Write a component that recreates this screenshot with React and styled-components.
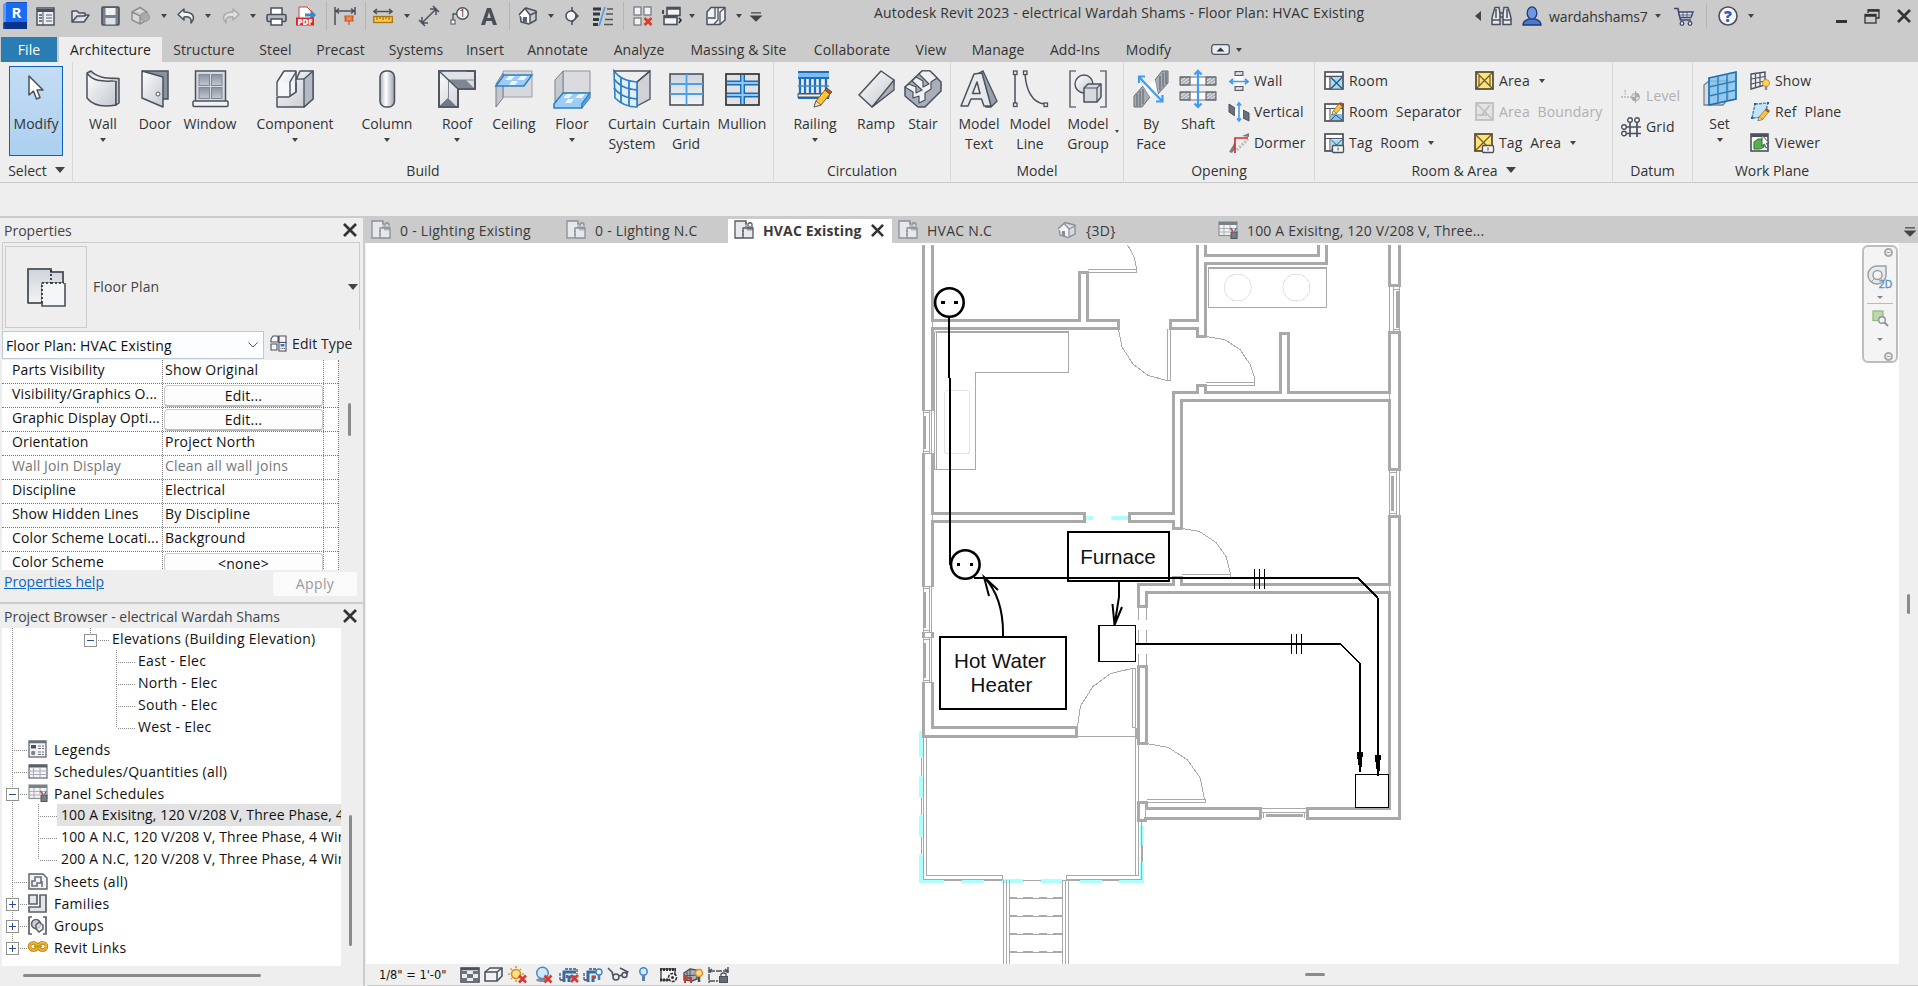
import React from "react";
import styled, { createGlobalStyle, css } from "styled-components";

const GlobalStyle = createGlobalStyle`
  * { box-sizing: border-box; }
  html, body { margin: 0; padding: 0; overflow: hidden; }
  body { font-family: "Open Sans", "Noto Sans", sans-serif; font-size: 14px; color: #333; background: #eee; }
  svg { display: block; flex: none; overflow: visible; }
`;

/* ---------- icons ---------- */
const D = "#4b515c";
const B = "#2f7fc4";

const pencil = (x, y, s = 1) => (
  <g transform={`translate(${x} ${y}) scale(${s})`}>
    <path d="M0 18 L2 12 L11 1 L16 5 L7 16 Z" fill="#ffc53a" stroke="#8a5a1c" strokeWidth="1" />
    <path d="M11 1 L13 -1 L18 3 L16 5 Z" fill="#b5562a" stroke="#6b3a1a" strokeWidth=".8" />
    <path d="M0 18 L2 12 L7 16 Z" fill="#f6e2bd" stroke="#555" strokeWidth=".8" />
  </g>
);

const hatchBox = (x, y, w, h) => (
  <g>
    <rect x={x} y={y} width={w} height={h} fill="#a9adb5" stroke="#555a63" />
    <path d={`M${x + 1} ${y + h - 1}L${x + w - 1} ${y + 1}M${x + 1} ${y + h / 2}L${x + w / 2} ${y + 1}M${x + w / 2} ${y + h - 1}L${x + w - 1} ${y + h / 2}`} stroke="#eee" strokeWidth="1" />
  </g>
);

const redX = (x, y) => (
  <path d={`M${x} ${y}l7 7m0 -7l-7 7`} stroke="#d93a2b" strokeWidth="2.6" fill="none" />
);

const ICONS = {
  logo: [25, 28, <>
    <path d="M0 3L4 0H24V27H0Z" fill="#1552c4" /><path d="M3 1H24V20H3Z" fill="#1a6cf5" /><path d="M0 3L3 1V20L0 21Z" fill="#5a9bff" /><path d="M1 20H24V27H2Z" fill="#0b3487" />
    <text x="13.5" y="15.5" fontSize="15" fontWeight="700" fill="#fff" textAnchor="middle">R</text></>],
  props: [19, 19, <><rect x="1" y="1" width="17" height="17" fill="#eceef1" stroke={D} strokeWidth="1.5" /><path d="M1 3.5H18" stroke={D} strokeWidth="3" /><path d="M7 5V18" stroke={D} /><path d="M3 8H6M3 11H6M3 14H6" stroke={D} strokeWidth="1.6" /><path d="M10 8H16M10 11H16M10 14H16" stroke="#888d96" strokeWidth="1.6" /></>],
  open: [21, 16, <path d="M2 14V3H7L9 5H15V8H7L2 14H14L19 7H15" fill="#dfe2e6" stroke={D} strokeWidth="1.5" strokeLinejoin="round" />],
  save: [19, 20, <><rect x="1" y="1" width="17" height="18" rx="1" fill="#7a808b" stroke={D} strokeWidth="1.6" /><rect x="4.500" y="2" width="10" height="7" fill="#f0f1f3" /><rect x="4.500" y="12" width="10" height="6.500" fill="#dfe2e6" /></>],
  cloud: [21, 20, <><path d="M2 6L10 1.500L17 6V14L10 18L2 14ZM2 6L10 10L17 6M10 10V18" fill="#d8d8d8" stroke="#8f8f8f" strokeWidth="1.5" /><circle cx="15" cy="11" r="4.500" fill="#ababab" stroke="#969696" /></>],
  undo: [20, 18, <path d="M8 2L2 7.500L8 13V10C13 9 16 11 15 16C20 10 17 5 8 5Z" fill="#f2f3f5" stroke={D} strokeWidth="1.5" strokeLinejoin="round" />],
  redo: [20, 18, <path d="M12 2L18 7.500L12 13V10C7 9 4 11 5 16C0 10 3 5 12 5Z" fill="#dedede" stroke="#aaa" strokeWidth="1.5" strokeLinejoin="round" />],
  print: [21, 19, <><rect x="5" y="1" width="11" height="8" fill="#fff" stroke={D} strokeWidth="1.5" /><rect x="1" y="7.500" width="19" height="7" rx="1.500" fill="#b5bac2" stroke={D} strokeWidth="1.6" /><rect x="5" y="12" width="11" height="6" fill="#fff" stroke={D} strokeWidth="1.5" /></>],
  pdf: [21, 20, <><path d="M3 12V1H11L15 5V12" fill="#fff" stroke="#c9463c" /><path d="M9 7.500H15V4L20 9L15 14V10.500H9Z" fill="#2a8ad8" /><rect x="0" y="11.500" width="18" height="8" fill="#d5281e" /><text x="9" y="18.500" fontSize="8" fontWeight="800" fill="#fff" textAnchor="middle">PDF</text></>],
  dimPin: [22, 20, <><path d="M1 1V19M21 1V9M2 5H20M5 2.500L2 5L5 7.500M17 2.500L20 5L17 7.500" stroke={D} strokeWidth="1.5" fill="none" /><path d="M11 10H19V12H18L19 15H11L12 12H11ZM15 15V19" fill="#f08a4a" stroke="#c9552a" strokeWidth="1.200" /></>],
  ruler: [20, 14, <><path d="M1 2.500H19M4 0L1 2.500L4 5M16 0L19 2.500L16 5" stroke={D} strokeWidth="1.6" fill="none" /><rect x=".7" y="7.500" width="18.600" height="6" fill="#ffc93c" stroke="#a8741a" strokeWidth="1.300" /><path d="M4 8V11M7 8V10M10 8V11M13 8V10M16 8V11" stroke="#8a5f16" /></>],
  align: [20, 20, <path d="M3 17L17 3M3 11V17H9M11 3H17V9M0 14L6 20M14 0L20 6" stroke={D} strokeWidth="1.500" fill="none" />],
  tag: [19, 18, <><circle cx="12.500" cy="6.500" r="5.800" fill="#f4f5f6" stroke={D} strokeWidth="1.400" /><path d="M6.500 7H3V13" stroke={D} strokeWidth="1.300" fill="none" /><rect x="1" y="13" width="4" height="4" fill="#fff" stroke={D} /><text x="12.300" y="10.200" fontSize="10" fill="#333" textAnchor="middle">1</text></>],
  textA: [18, 19, <path d="M1 18L7 1H11L17 18H13L11.700 14H6.300L5 18ZM7.200 11H10.800L9 5Z" fill="#4b4f57" fillRule="evenodd" />],
  house: [20, 20, <><path d="M2 8L8 2L18 5V14L11 18L3 16Z" fill="#c6cad1" stroke={D} strokeWidth="1.500" strokeLinejoin="round" /><path d="M1 9L7 2.500L12 9V18M12 9L19 6" fill="#fff" stroke={D} strokeWidth="1.500" /><rect x="5" y="11" width="4" height="5" fill="#5b616c" /></>],
  section: [16, 18, <><path d="M8 0V18" stroke={D} strokeWidth="1.500" /><path d="M8 2L15 9L8 16Z" fill={D} /><circle cx="7" cy="9" r="5" fill="#f4f5f6" stroke={D} strokeWidth="1.600" /></>],
  thin: [20, 19, <><path d="M0 2H8M0 7H7M0 12.500H6M0 17.500H5" stroke="#33373e" strokeWidth="3" /><path d="M14 2H20M13 7H20M12 12.500H20M11 17.500H20" stroke="#555" strokeWidth="1.300" /><path d="M12 0L6 19" stroke="#4a9be8" strokeWidth="1.600" /></>],
  closeWin: [20, 20, <><g fill="#f3f3f3" stroke="#777c86" strokeWidth="1.300"><rect x="1" y="1" width="7" height="8" /><rect x="11" y="1" width="7" height="8" /><rect x="1" y="12" width="7" height="7" /></g>{redX(11.500, 12)}</>],
  switchWin: [20, 20, <><rect x="5" y="1.500" width="13" height="8" fill="#f3f3f3" stroke={D} strokeWidth="1.600" /><path d="M5 2.500H18" stroke={D} strokeWidth="2.500" /><rect x="2" y="10" width="13" height="8.500" fill="#f3f3f3" stroke={D} strokeWidth="1.600" /><path d="M2 11H15" stroke={D} strokeWidth="2.500" /><path d="M1 8V4M17 12L19 14L17 17" stroke="#222" strokeWidth="1.500" fill="none" /></>],
  comp: [21, 20, <><path d="M1 6L5 1.500H19V14L14 18.500H1Z" fill="#f1f2f4" stroke={D} strokeWidth="1.500" strokeLinejoin="round" /><path d="M9 1.500V12H2M12 2V14L8 18M14 18V6L19 1.500" stroke={D} strokeWidth="1.300" fill="none" /></>],
  qatMenu: [10, 9, <path d="M0 .8H10M0 4H10L5 9Z" fill="#444" stroke="#444" strokeWidth="1.200" />],
  binoc: [21, 20, <><path d="M2 8L4 1.500H8L9 8V18.500H1V12Z M12 8L13 1.500H17L19 8L20 12V18.500H12Z" fill="#e7e9ec" stroke={D} strokeWidth="1.500" /><path d="M9 7H12M9 11H12M1 14H9M12 14H20M5 3V12M16 3V12" stroke={D} strokeWidth="1.500" /></>],
  user: [20, 20, <><path d="M1 19C1 14 5 14 8 12.500H12C15 14 19 14 19 19Z" fill="#4b78c8" stroke="#1e3a78" strokeWidth="1.300" /><ellipse cx="10" cy="7" rx="4.800" ry="6.200" fill="#6d97e0" stroke="#1e3a78" strokeWidth="1.300" /></>],
  cart: [20, 19, <><path d="M0 1.500H4L6.500 13H17" stroke="#3f4870" strokeWidth="1.600" fill="none" /><path d="M4.500 5H19L17 10.500H6Z" fill="#e9ebf2" stroke="#3f4870" strokeWidth="1.400" /><path d="M9 5V10M13 5V10M5 8H18" stroke="#3f4870" strokeWidth=".8" /><circle cx="8" cy="16.500" r="1.800" fill="#fff" stroke="#3f4870" strokeWidth="1.300" /><circle cx="16" cy="16.500" r="1.800" fill="#fff" stroke="#3f4870" strokeWidth="1.300" /></>],
  help: [20, 20, <><circle cx="10" cy="10" r="9" fill="#f7f8fa" stroke="#4a4f5c" strokeWidth="1.600" /><text x="10" y="15.500" fontSize="15.500" fontWeight="800" fill="#2a5fc0" textAnchor="middle">?</text></>],
  min: [11, 13, <rect y="10" width="11" height="3" fill="#333" />],
  restore: [16, 15, <><path d="M4 4V1H15V9H12" stroke="#333" strokeWidth="1.300" fill="none" /><path d="M4 1.500H15M1 6.500H12" stroke="#333" strokeWidth="2.500" /><rect x="1" y="5.500" width="11" height="8.500" fill="none" stroke="#333" strokeWidth="1.300" /></>],
  close: [14, 14, <path d="M1 1L13 13M13 1L1 13" stroke="#333" strokeWidth="2.700" />],
  collapse: [19, 11, <><rect x=".7" y=".7" width="17.600" height="9.600" rx="2.500" fill="#e8ebef" stroke="#50555f" strokeWidth="1.300" /><path d="M5.500 7.500H13.500L9.500 3.500Z" fill="#333" /></>],

  cursor: [20, 27, <path d="M3 1V20L7.500 16L10.500 24L14 22.500L11 15H17Z" fill="#fff" stroke={D} strokeWidth="1.500" strokeLinejoin="round" />],
  wall: [36, 38, <><path d="M2 3C9 13 20 11 31 11V35C20 37 9 37 2 28Z" fill="url(#gl)" stroke={D} strokeWidth="1.500" strokeLinejoin="round" /><path d="M2 3L6 1C14 9 24 8 34 8.500V33L31 35V11" fill="#c4c9d0" stroke={D} strokeWidth="1.500" strokeLinejoin="round" /></>],
  door: [28, 38, <><path d="M1 1H27V29H22" fill="#8b929f" stroke={D} strokeWidth="1.500" /><path d="M1 1L22 7V37L1 28Z" fill="url(#gl)" stroke={D} strokeWidth="1.500" strokeLinejoin="round" /><circle cx="17" cy="24" r="2" fill="#fff" stroke={D} /></>],
  window: [37, 38, <><rect x="3.500" y="1" width="30" height="31" fill="#d7dadf" stroke={D} strokeWidth="1.500" /><g fill="url(#gd)" stroke="#808692"><rect x="7" y="4.500" width="10.500" height="11" /><rect x="19.500" y="4.500" width="10.500" height="11" /><rect x="7" y="17.500" width="10.500" height="11" /><rect x="19.500" y="17.500" width="10.500" height="11" /></g><rect x="1" y="31" width="35" height="5.500" rx="1" fill="#f1f2f4" stroke={D} strokeWidth="1.500" /></>],
  component: [38, 38, <><path d="M1 12L8 1H20V22L14 27H1Z" fill="#f4f5f6" /><path d="M1 12L8 1H20V10L24 1H37V29L28 37H1V27H13L20 22V12" fill="url(#gl)" stroke={D} strokeWidth="1.500" strokeLinejoin="round" /><path d="M1 12V26M20 9V22L14 26V12L20 2" stroke={D} strokeWidth="1.400" fill="none" /><path d="M28 9L37 1V29L28 37Z" fill="#b4bac4" stroke={D} strokeWidth="1.300" strokeLinejoin="round" /><path d="M28 9H20" stroke={D} strokeWidth="1.300" /></>],
  column: [17, 38, <rect x="1" y="1" width="14.500" height="36" rx="6" fill="url(#gc)" stroke={D} strokeWidth="1.500" />],
  roof: [38, 38, <><path d="M1 1H37V19H20V37H1Z" fill="url(#gl)" stroke={D} strokeWidth="1.600" /><path d="M1 1L10.500 10H28V1Z" fill="#dfe2e7" /><path d="M1 37L10.500 28V10H37" fill="none" stroke="#7f8591" /><path d="M11 10L20 19H37L28 10Z" fill="#7f8794" /><path d="M1 37L10 28L19 37Z" fill="#727986" /><path d="M1 1L20 19" stroke={D} strokeWidth="1.300" /><path d="M1 1H37V19H20V37H1Z" fill="none" stroke={D} strokeWidth="1.600" /></>],
  ceiling: [38, 38, <><path d="M8 1H37V27H8Z" fill="#d6d8dc" stroke="#999ea7" /><path d="M1 14L8 3V28L1 37Z" fill="#c3c7ce" stroke="#777d88" /><path d="M1 16L9 5H37L29 16Z" fill="#9ccdf6" stroke={B} strokeWidth="1.500" /><path d="M10 10L14 6H20L16 10ZM22 10L26 6H32L29 10ZM14 15L17 11H23L20 15Z" fill="#fff" opacity=".8" /></>],
  floor: [38, 39, <><path d="M10 1H37V23H10Z" fill="#d9dbdf" stroke="#8c919b" /><path d="M2 10L10 1V24L2 33Z" fill="#c6cad0" stroke="#7d828c" /><path d="M1 34L10 23H37L29 34V38H1Z" fill="#9ccdf6" stroke={B} strokeWidth="1.600" strokeLinejoin="round" /><path d="M29 34L37 23V28L29 38Z" fill="#5aa4e0" stroke={B} /><path d="M10 28L14 24H20L16 28ZM22 28L26 24H32L29 28ZM12 33L15 29H21L18 33Z" fill="#fff" opacity=".8" /></>],
  curtainSystem: [38, 38, <><path d="M24 12L37 1V29L24 36Z" fill="#cfd2d7" stroke={D} strokeWidth="1.300" /><path d="M1 1C8 10 16 11 24 12V37C14 37 8 34 2 28Z" fill="#dfeefb" stroke={B} strokeWidth="1.600" /><path d="M1 9C8 18 16 19 24 20M1 18C8 27 16 28 24 29M8 7V33M16 11V36" stroke={B} strokeWidth="1.800" fill="none" /><path d="M1 1H37M24 12L37 1" stroke={D} strokeWidth="1.500" /></>],
  curtainGrid: [35, 33, <><rect x="1" y="1" width="33" height="31" fill="url(#gd2)" stroke={D} strokeWidth="1.600" /><path d="M17.500 1V32M1 11H34M1 21H34" stroke="#49a0ec" strokeWidth="1.800" /></>],
  mullion: [35, 33, <><rect x="1" y="1" width="33" height="31" fill="#dfe1e5" stroke="#333" strokeWidth="1.700" /><path d="M17.500 2V31M2 10H33M2 22H33" stroke="#1c6cb5" strokeWidth="5" /><path d="M17.500 2V31M2 10H33M2 22H33" stroke="#8cc8f8" strokeWidth="2.200" /></>],
  railing: [37, 38, <><path d="M1 2H32M1 8H32M1 24H32M1 28H32" stroke="#1d70bb" strokeWidth="2" /><path d="M1 5H32" stroke="#7dbcf0" strokeWidth="4" /><path d="M3 8V25M8 8V25M13 8V25M18 8V25M23 8V25M29 8V25" stroke="#1d70bb" strokeWidth="2.300" /><path d="M1 16H32" stroke="#3a8cd4" strokeWidth="1.500" /><rect x="1" y="24" width="31" height="3" fill="#eee" stroke={D} />{pencil(17, 19)}</>],
  ramp: [37, 38, <><path d="M1 25L23 1L36 10L35 20L14 37Z" fill="url(#gl)" stroke={D} strokeWidth="1.500" strokeLinejoin="round" /><path d="M14 37L36 10V20Z" fill="#a9afb9" stroke={D} strokeWidth="1.300" strokeLinejoin="round" /></>],
  stair: [38, 38, <><path d="M1 17L18 1H26L37 12V21L21 37H14L1 26Z" fill="#a9afba" stroke={D} strokeWidth="1.500" strokeLinejoin="round" /><path d="M1 17L5 14L12 17V23L18 20L8 11L12 7L19 11V17L25 14L15 4L18 1H26L33 8L27 12V19L21 23V30L15 33V26L9 28V22Z" fill="#f0f1f3" stroke={D} strokeWidth="1.200" strokeLinejoin="round" /></>],
  modelText: [38, 38, <><path d="M19 3L23 1L37 31L31 37H26L23 30Z" fill="#9aa1ad" stroke={D} strokeWidth="1.300" /><path d="M1 36L14 4L22 3L31 36H24L21.500 29H11L8 36ZM12.500 23.500H20L17 12Z" fill="#e7e9ec" fillRule="evenodd" stroke={D} strokeWidth="1.500" strokeLinejoin="round" /></>],
  modelLine: [37, 38, <><path d="M3 4V34M13 4C14 18 19 33 33 34" stroke={D} strokeWidth="1.500" fill="none" /><g fill="#eee" stroke={D} strokeWidth="1.300"><rect x="1.500" y="1" width="3.500" height="3.500" /><rect x="1.500" y="33" width="3.500" height="3.500" /><rect x="11.500" y="1" width="3.500" height="3.500" /><rect x="32" y="33" width="3.500" height="3.500" /></g></>],
  modelGroup: [38, 38, <><path d="M7 1H1V37H7M31 1H37V37H31" stroke="#70757f" strokeWidth="1.700" fill="none" /><circle cx="15" cy="14" r="9" fill="url(#gl)" stroke={D} strokeWidth="1.400" /><path d="M15 18L19 14H32V27L28 32H15Z" fill="#d6d9de" stroke={D} strokeWidth="1.500" strokeLinejoin="round" /><path d="M15 18H28L32 14M28 18V32" stroke={D} fill="none" strokeWidth="1.200" /></>],
  byFace: [36, 38, <><path d="M22 10L29 1H35V13L25 24ZM1 26L10 16L17 27L9 37H1Z" fill="#a7abb3" stroke="#686d77" /><path d="M27 6V20M30 3V17M33 2V14M4 24V36M7 21V36M10 19V34" stroke="#5b6069" /><path d="M10 16L22 10L25 24L17 27Z" fill="#fafafa" /><path d="M6 7L29 31M6 13V6.500H12M23 31.500H29.500V25" stroke="#3e9cf3" strokeWidth="2.200" fill="none" /></>],
  shaft: [38, 38, <>{hatchBox(1, 7, 10, 8)}{hatchBox(27, 7, 10, 8)}{hatchBox(1, 22, 10, 8)}{hatchBox(27, 22, 10, 8)}<rect x="12" y="6.500" width="14" height="9" fill="#fff" /><rect x="12" y="21.500" width="14" height="9" fill="#fff" /><path d="M1 7H37M1 15H37M1 22H37M1 30H37" stroke="#666b75" /><path d="M19 2V36M15.500 4.500L19 .8L22.500 4.500M15.500 33.500L19 37L22.500 33.500" stroke="#3e9cf3" strokeWidth="2.200" fill="none" /></>],
  oWall: [20, 20, <>{hatchBox(6, .5, 8, 4)}{hatchBox(6, 15.500, 8, 4)}<rect x="6" y="5" width="8" height="10" fill="#fff" /><path d="M1 10.500H19M4 8L1 10.500L4 13M16 8L19 10.500L16 13" stroke="#3e9cf3" strokeWidth="1.700" fill="none" /></>],
  oVert: [20, 20, <><path d="M0 2L6 6V14L0 10ZM14 8L20 11V19L14 16Z" fill="#6b7079" stroke={D} /><path d="M6 6L14 8V16L6 14Z" fill="#fff" /><path d="M10 1V19M8 3.500L10 .8L12 3.500M8 16.500L10 19L12 16.500" stroke="#3e9cf3" strokeWidth="1.600" fill="none" /></>],
  oDormer: [20, 20, <><path d="M0 19L6 9V16L3 20ZM13 3L20 0V4Z" fill="#777c86" /><path d="M8 17L19 6" stroke="#bbb" strokeWidth="3" strokeDasharray="2 1.500" /><path d="M6 20V5H19" stroke="#d5322b" strokeWidth="1.700" fill="none" /></>],
  room: [20, 19, <><rect x="1" y="1" width="18" height="17" fill="#fff" stroke={D} strokeWidth="1.700" /><path d="M1 5.500H19M6 5.500V18" stroke={D} strokeWidth="1.300" /><rect x="7" y="6.500" width="11" height="11" fill="#a8dcf4" /><path d="M7 6.500L18 17.500M18 6.500L7 17.500" stroke="#27567c" strokeWidth="1.300" /></>],
  roomSep: [20, 20, <><rect x="1" y="2" width="18" height="17" fill="#fff" stroke={D} strokeWidth="1.700" /><path d="M1 6.500H19M6 6.500V19" stroke={D} /><rect x="7" y="12" width="11" height="6" fill="#7fc4ec" /><path d="M7 18L12 13L18 18" stroke="#27567c" fill="none" />{pencil(8, 1, .65)}</>],
  tagRoom: [20, 20, <><rect x="1" y="1" width="18" height="17" fill="#fff" stroke={D} strokeWidth="1.700" /><path d="M1 5.500H19M6 5.500V18" stroke={D} /><rect x="7" y="6.500" width="11" height="11" fill="#a8dcf4" /><path d="M7 6.500L18 17.500M18 6.500L7 17.500" stroke="#27567c" /><rect x="8.500" y="12.500" width="11" height="7" rx="1" fill="#f4f5f7" stroke={D} strokeWidth="1.300" /><path d="M14 14.500V17.500" stroke="#444" /></>],
  area: [19, 19, <><rect x="1" y="1" width="17" height="17" fill="#ffe27a" stroke="#54472a" strokeWidth="1.700" /><path d="M2 2L17 17M17 2L2 17M4 5V15M15 5V15" stroke="#6b5a2b" strokeWidth="1.200" /></>],
  areaB: [19, 19, <><rect x="1" y="1" width="17" height="17" fill="#e4e4e4" stroke="#bdbdbd" strokeWidth="1.700" /><path d="M2 2L17 17M6 14L15 3M2 13H12" stroke="#bdbdbd" strokeWidth="1.500" /></>],
  tagArea: [20, 20, <><rect x="1" y="1" width="17" height="17" fill="#ffe27a" stroke="#54472a" strokeWidth="1.700" /><path d="M2 2L17 17M17 2L2 17" stroke="#6b5a2b" strokeWidth="1.200" /><rect x="8.500" y="12.500" width="11" height="7" rx="1" fill="#f4f5f7" stroke={D} strokeWidth="1.300" /><path d="M14 14.500V17.500" stroke="#444" /></>],
  level: [20, 14, <><path d="M0 8H10" stroke="#b5b5b5" strokeDasharray="2 1" strokeWidth="1.500" /><text x="4" y="5.500" fontSize="7" fill="#aaa" textAnchor="middle">1</text><circle cx="14.500" cy="8" r="4" fill="#d8d8d8" stroke="#b0b0b0" /><path d="M14.500 4A4 4 0 0 1 18.500 8H10.500A4 4 0 0 0 14.500 12Z" fill="#aaa" /><path d="M14.500 2V14" stroke="#aaa" /></>],
  grid: [20, 20, <><path d="M9 5V20M16 5V20M5 10H20M5 16.500H20" stroke={D} strokeWidth="1.700" /><g fill="#fff" stroke={D} strokeWidth="1.400"><circle cx="9" cy="3" r="2.300" /><circle cx="16" cy="3" r="2.300" /><circle cx="3" cy="10" r="2.300" /><circle cx="3" cy="16.500" r="2.300" /></g></>],
  set: [34, 36, <><path d="M1 14L6 10H25V28L20 34H1Z" fill="#d8dbe0" stroke="#7c828d" strokeWidth="1.300" /><path d="M6 7L33 1V28L6 34Z" fill="#7fc2ec" fillOpacity=".8" stroke="#1d6eb0" strokeWidth="1.700" /><path d="M15 5V32M24 3V30M6 16L33 10M6 25L33 19" stroke="#2d80c0" strokeWidth="1.500" /></>],
  show: [20, 20, <><path d="M1 3L15 1V14L1 18Z" fill="#eceef0" stroke={D} strokeWidth="1.400" /><path d="M5.500 2.500V17M10 2V15.500M1 8L15 5.500M1 13L15 10" stroke={D} strokeWidth="1.200" /><circle cx="16" cy="12" r="3.500" fill="#ffd84a" stroke="#e08a2a" /><path d="M16 15V19" stroke="#8a8f98" strokeWidth="2.500" /></>],
  refPlane: [20, 19, <><path d="M5 2L18 1L14 15L2 16Z" fill="#c5e4fa" stroke="#2f86d0" strokeWidth="1.400" strokeDasharray="3 1" /><path d="M4 1h2v2h-2zM17 0h2v2h-2zM1 15h2v2h-2z" fill="#1c5f9e" />{pencil(8, 7, .65)}</>],
  viewer: [20, 19, <><rect x="1" y="1" width="17" height="17" fill="#f4f5f6" stroke={D} strokeWidth="1.600" /><path d="M1 2.500H18" stroke={D} strokeWidth="3" /><path d="M4 9L8 6H14V14L10 16H4Z" fill="#57b04e" stroke="#2d7a2a" /><path d="M12 2V13L14.500 11L16 15L18 14L16.500 10H19Z" fill="#fff" stroke={D} /></>],

  planBig: [39, 39, <><path d="M1 1H24V4H36V15H15V35H1Z" fill="url(#gd2)" stroke="#70757e" strokeWidth="1.600" /><rect x="15" y="15" width="23" height="23" fill="#f4f5f6" /><path d="M1 35V1H24V4H36V15M1 35H15V38H38V15" fill="none" stroke={D} strokeWidth="1.600" /><path d="M24 2V15H15V36M24 15H37" stroke="#222" strokeWidth="1.600" strokeDasharray="2 2" fill="none" /></>],
  editType: [17, 17, <><path d="M1 4L3 1H8V7H1ZM9 1H16V8M9 1V7M1 9H7V15H1Z" fill="#f6f6f6" stroke={D} strokeWidth="1.100" /><rect x="9" y="7.500" width="7" height="8.500" fill="#fff" stroke={D} strokeWidth="1.100" /><rect x="10.500" y="9" width="4" height="2.500" fill="#3377cc" /><path d="M10.500 13.500H15" stroke={D} strokeDasharray="1 .7" /></>],
  plan: [20, 20, <><path d="M1 1H12V5H19V18H9V19H1Z" fill="#e6e8eb" /><path d="M12 5V1H1V18H9V8H19V18H9" stroke="currentColor" strokeWidth="1.300" fill="none" /><path d="M12 2V8M9 10V18" stroke="currentColor" strokeDasharray="2 1.500" strokeWidth="1.200" fill="none" /><path d="M14 6V4Q16 1.500 18 4V6" stroke="currentColor" strokeWidth="1.300" fill="none" /><rect x="13" y="6" width="6" height="4.500" fill="currentColor" opacity=".55" /></>],
  view3d: [20, 18, <><path d="M2 7L8 1.500L18 4V13L11 16.500L3 14Z" fill="#d9dbde" stroke="#888d96" strokeWidth="1.300" /><path d="M1 8L7 2.500L12 8V16.500M12 8L18 5" stroke="#888d96" strokeWidth="1.200" fill="#f5f5f5" /><rect x="5" y="10" width="3" height="5" fill="#888d96" /></>],
  sched: [20, 18, <><rect x="1" y="1" width="18" height="13.500" fill="#f1f2f4" stroke="#8b9099" strokeWidth="1.200" /><path d="M1 2.500H19" stroke="#7a808a" strokeWidth="3" /><path d="M1 7.500H19M1 11H12M6 4V14M12 4V10" stroke="#a9adb4" /><rect x="13" y="11" width="6" height="6.500" fill="#777d88" stroke="#555" /><path d="M12.500 7L15 10.500" stroke="#c33" strokeWidth="1.300" /><path d="M18.500 7L16.500 10.500" stroke="#37a" strokeWidth="1.300" /></>],
  legend: [19, 18, <><rect x="1" y="1" width="17" height="16" fill="#f4f5f6" stroke="#6b717b" strokeWidth="1.400" /><path d="M1 2H18" stroke="#6b717b" strokeWidth="2.500" /><rect x="3" y="5" width="5" height="3.500" fill="#4b515c" /><circle cx="5.200" cy="13" r="2.200" fill="#7d838d" /><path d="M10 6H16M10 8.500H16M10 12H16M10 14.500H16" stroke="#6b717b" strokeWidth="1.200" strokeDasharray="3 1" /></>],
  table: [20, 15, <><rect x="1" y="1" width="18" height="13" fill="#f4f5f6" stroke="#6b717b" strokeWidth="1.300" /><path d="M1 2H19" stroke="#5a606a" strokeWidth="3" /><path d="M1 7H19M1 10.500H19M5.500 3V14M12 3V14" stroke="#a6abb3" /></>],
  sheets: [20, 17, <><path d="M1 1H15L19 5V16H1Z" fill="#f1f2f4" stroke="#5b616b" strokeWidth="1.400" /><path d="M4 13V8H7V4H13V10H9V13ZM14 8V14" fill="none" stroke="#6b717b" strokeWidth="1.600" /></>],
  families: [19, 19, <path d="M1 1H9V10H1ZM12 1H18V18H1V13H12Z" fill="#e3e5e8" stroke="#5b616b" strokeWidth="1.700" />],
  groups: [19, 19, <><path d="M4 1H1V18H4M15 1H18V18H15" stroke="#5b616b" strokeWidth="1.700" fill="none" /><circle cx="8" cy="8" r="4.500" fill="#c9cdd4" stroke="#5b616b" strokeWidth="1.500" /><path d="M8 9L11 6L15 9V13L11 16L8 13Z" fill="#e3e5e8" fillOpacity=".7" stroke="#5b616b" strokeWidth="1.500" /></>],
  links: [20, 12, <><rect x="1.500" y="2" width="8" height="7" rx="3.500" fill="none" stroke="#a06f14" strokeWidth="3.400" /><rect x="10.500" y="2" width="8" height="7" rx="3.500" fill="none" stroke="#a06f14" strokeWidth="3.400" /><rect x="1.500" y="2" width="8" height="7" rx="3.500" fill="none" stroke="#eab02b" strokeWidth="2.400" /><rect x="10.500" y="2" width="8" height="7" rx="3.500" fill="none" stroke="#eab02b" strokeWidth="2.400" /><path d="M6 5.500H14" stroke="#c98f1c" strokeWidth="2.200" /></>],

  vDetail: [20, 16, <><rect x="1" y="1" width="18" height="14" fill="#e9ebed" stroke={D} strokeWidth="1.600" /><path d="M1 2H19" stroke={D} strokeWidth="2.500" /><path d="M2 4H7V7H2ZM13 4H18V7H13ZM7 7H13V11H7ZM2 11H7V14H2ZM13 11H18V14H13Z" fill="#6d737e" /></>],
  vStyle: [19, 15, <><path d="M1 5L6 1H18V9L13 14H1Z" fill="#f0f1f3" stroke={D} strokeWidth="1.600" strokeLinejoin="round" /><path d="M1 5H13L18 1M13 5V14" stroke={D} strokeWidth="1.500" fill="none" /></>],
  vSun: [20, 18, <><circle cx="8" cy="8" r="4.500" fill="#ffe08a" stroke="#d68a1e" strokeWidth="1.500" /><path d="M8 0V2M8 14V16M0 8H2M2.500 2.500L4 4M13 3L12 4M3 13L4 12M14 8H16" stroke="#e09a2a" strokeWidth="1.700" />{redX(11, 9.500)}</>],
  vShadow: [18, 18, <><ellipse cx="8" cy="14" rx="7" ry="2" fill="#8a8f98" /><circle cx="7.500" cy="7" r="5.800" fill="#cfe7fb" stroke="#4a86bd" strokeWidth="1.400" />{redX(9.500, 9.500)}</>],
  vCropX: [20, 18, <><path d="M5 16V6H17M10 16V11H17" fill="none" stroke="#2b6fb0" strokeWidth="3" /><path d="M1 7V14M1 14H5M6 3H18V8" stroke={D} strokeWidth="1.300" strokeDasharray="3 1" /><path d="M7 10.500H9" stroke="#d93a2b" strokeWidth="3" />{redX(12, 9)}</>],
  vCropB: [20, 18, <><path d="M5 16V6H13M10 16V11H13" fill="none" stroke="#2b6fb0" strokeWidth="3" /><path d="M1 7V14M1 14H5M6 3H13" stroke={D} strokeWidth="1.300" strokeDasharray="3 1" /><path d="M9 11h4" stroke="#d93a2b" strokeWidth="2.500" /><circle cx="16" cy="6" r="3" fill="#e6f3fe" stroke="#3d82c4" strokeWidth="1.300" /><path d="M16 9V14" stroke="#3d82c4" strokeWidth="2.500" /></>],
  vGlasses: [21, 15, <path d="M0 1L5 6M12 1L20 5M5 10a3 3 0 1 0 6 0a3 3 0 1 0 -6 0M5 9L4 5M11 9L14 8M14 8a2.500 2.500 0 1 0 5 0a2.500 2.500 0 1 0 -5 0M19 7L20 4" stroke={D} strokeWidth="1.500" fill="#e4edf5" />],
  vBulb: [9, 15, <><circle cx="4.500" cy="4.500" r="3.700" fill="#d5ebfd" stroke="#3d82c4" strokeWidth="1.500" /><path d="M4.500 8V14" stroke="#5b7fa6" strokeWidth="3" /></>],
  vTemp: [19, 16, <><rect x="2" y="2" width="14" height="11" fill="#f2f3f5" stroke={D} strokeWidth="1.500" /><path d="M1 2.500H17M1 13H9" stroke="#333" strokeWidth="3" strokeDasharray="2 1" /><circle cx="13.500" cy="10.500" r="4" fill="#f2f3f5" stroke="#333" strokeWidth="1.600" strokeDasharray="3 1" /><circle cx="13.500" cy="10.500" r="1.500" fill="#333" /></>],
  vAnal: [20, 16, <><path d="M1 6L7 2L14 3V12L9 14L1 13Z" fill="#a9aeb7" stroke={D} strokeWidth="1.400" /><path d="M4 5V13M7 3V13M1 9L14 8" stroke={D} /><path d="M2 8V16M8 10V16M2 11H8" stroke="#cf3a2e" strokeWidth="2" /><circle cx="16" cy="6" r="3.500" fill="#ffe08a" stroke="#e08a2a" strokeWidth="1.500" /><path d="M16 10V15" stroke={D} strokeWidth="2.500" /></>],
  vConst: [21, 16, <><path d="M1 0V16M20 0V7M1 4H20M4 2L1 4L4 6M17 2L20 4L17 6M1 14H10" stroke={D} strokeWidth="1.400" fill="none" strokeDasharray="6 1" /><rect x="11.500" y="9.500" width="8" height="6" fill="#666c77" stroke={D} /><path d="M13 9.500V7Q15.500 5 18 7V9.500" stroke={D} strokeWidth="1.300" fill="none" /></>],
  wheel: [24, 24, <><path d="M10 1H18V10A9 9 0 1 1 10 1Z" fill="#e9eaec" stroke="#9a9ea6" strokeWidth="1.500" /><circle cx="9.500" cy="10" r="4.500" fill="#f6f6f6" stroke="#9a9ea6" strokeWidth="1.500" /><path d="M4 16L7 13M15 16L12 13" stroke="#9a9ea6" /><text x="17.500" y="23" fontSize="10.500" fill="#5a93cc" stroke="#5a93cc" strokeWidth=".4" textAnchor="middle">2D</text></>],
  zoomReg: [17, 17, <><rect x="1" y="1" width="10" height="9.500" fill="#bcd9ae" stroke="#93bb83" strokeWidth="1.300" /><circle cx="10" cy="10" r="3.300" fill="#f4f4f4" stroke="#8f939b" strokeWidth="1.400" /><path d="M12.500 12.500L16 16" stroke="#8f939b" strokeWidth="2" /></>],
};

const Icon = ({ name }) => {
  const [w, h, art] = ICONS[name];
  return <svg width={w} height={h} viewBox={`0 0 ${w} ${h}`} fill="none">{art}</svg>;
};

const Caret = styled.span`
  display: inline-block;
  flex: none;
  border: ${p => p.$s || 3}px solid transparent;
  border-top: ${p => (p.$s || 3) + 1}px solid #444;
  border-bottom: 0;
`;

/* ---------- shell ---------- */
const Shell = styled.div`
  width: 1918px; height: 986px; display: flex; flex-direction: column; background: #eee; overflow: hidden; white-space: nowrap;
`;
const TitleBar = styled.header`
  height: 37px; flex: none; display: flex; background: #cbcbcb; padding-left: 3px;
`;
const Quick = styled.div`display: flex; align-items: center; height: 32px; width: 777px;`;
const QuickItem = styled.span`margin-left: ${p => p.$gap}px; display: flex; flex: none;`;
const Divider = styled.span`width: 1px; height: 28px; background: #b4b4b4;`;
const Slot = styled.div`
  width: ${p => p.$w}px; height: 100%; display: flex; align-items: center; justify-content: center; flex: none;
  ${p => p.$line && css`border-left: 1px solid #b4b4b4; height: 24px;`}
`;
const Title = styled.div`width: 684px; padding: 3px 0 0 94px; font-size: 14px; line-height: 20px; letter-spacing: 0.15px; flex: none;`;
const Account = styled.div`display: flex; align-items: center; height: 32px; flex: none;`;
const UserName = styled.span`width: 105px; padding-left: 7px; letter-spacing: -0.1px;`;
const BackArrow = styled.span`border: 5px solid transparent; border-right: 6px solid #444; border-left: 0;`;

const RibbonTabs = styled.nav`height: 25px; flex: none; display: flex; align-items: center; background: #cbcbcb; padding-left: 1px;`;
const RTab = styled.div`
  width: ${p => p.$w}px; height: 25px; display: flex; align-items: center; justify-content: center; flex: none; padding-bottom: 1px; letter-spacing: .08px;
  ${p => p.$file && css`background: #2a7db3; color: #fff; margin-right: 2px;`}
  ${p => p.$on && css`background: #eee; color: #222;`}
`;

const Ribbon = styled.section`height: 121px; flex: none; display: flex; background: #eee; border-bottom: 1px solid #c9c9c9; padding-left: 1px;`;
const Panel = styled.div`
  width: ${p => p.$w}px; flex: none; display: flex; flex-direction: column; margin-bottom: 1px;
  border-right: ${p => (p.$last ? 0 : 1)}px solid #d8d8d8;
`;
const PanelBody = styled.div`height: 97px; display: flex;`;
const PanelTitle = styled.div`height: 22px; display: flex; align-items: center; justify-content: center; gap: 8px;`;
const BigButton = styled.button`
  all: unset; width: ${p => p.$w}px; flex: none; display: flex; flex-direction: column; align-items: center; position: relative;
`;
const BigIcon = styled.div`height: 52px; width: 100%; padding-top: 7px; display: flex; align-items: center; justify-content: center; padding-bottom: 5px;`;
const BigLabel = styled.div`line-height: 20px; text-align: center; white-space: pre; margin-bottom: 4px;`;
const SideCaret = styled.div`position: absolute; right: 4px; top: 68px; display: flex;`;
const ModifyButton = styled.button`
  all: unset; box-sizing: border-box; width: 54px; height: 90px; margin: 4px 0 0 8px; border: 1px solid #0a63bd;
  background: linear-gradient(#c4dcf4, #acd0f0); display: flex; flex-direction: column; align-items: center; padding-top: 8px; gap: 12px; line-height: 20px;
`;
const Small = styled.div`display: flex; flex-direction: column; padding-left: ${p => p.$pl || 0}px; padding-top: ${p => p.$pt ?? 3}px; width: ${p => p.$w || "auto"};`;
const SmallItem = styled.div`
  height: 31px; display: flex; align-items: center; gap: 5px; word-spacing: 4px; color: ${p => (p.$off ? "#b0b0b0" : "#333")}; letter-spacing: 0.15px;
`;
const SmallIcon = styled.span`width: 20px; display: flex; justify-content: center;`;
const SmallLabel = styled.span`padding-bottom: 1px;`;
const SmallCaret = styled.span`margin-left: 4px; display: flex;`;
const Options = styled.div`height: 33px; flex: none;`;

const Work = styled.main`flex: 1; display: flex; min-height: 0;`;
const Left = styled.aside`
  width: 365px; flex: none; border-top: 2px solid #ccc; border-right: 2px solid #ccc; display: flex; flex-direction: column;
`;
const DockTitle = styled.div`
  height: 24px; flex: none; display: flex; align-items: center; justify-content: space-between; padding: 0 6px 0 4px; font-size: 14px; color: #444;
`;
const TypeBox = styled.div`
  margin: 0 3px 0 2px; height: 88px; border: 1px solid #ccc; border-bottom: 0; display: flex; align-items: center; padding: 0 1px 0 2px; flex: none;
`;
const Thumb = styled.div`width: 82px; height: 82px; border: 1px solid #ccc; display: flex; align-items: center; justify-content: center; margin-right: 6px; align-self: flex-start; margin-top: 3px;`;
const TypeName = styled.div`flex: 1; color: #444; letter-spacing: .1px;`;
const PickRow = styled.div`height: 30px; flex: none; display: flex; align-items: flex-start; padding: 1px 0 0 2px; color: #111;`;
const Combo = styled.div`
  width: 262px; height: 28px; background: #fbfdfe; border: 1px solid #bccad6; display: flex; align-items: center; justify-content: space-between; padding: 0 5px 0 3px; margin-right: 6px; letter-spacing: .12px;
`;
const EditType = styled.div`display: flex; align-items: center; gap: 5px; height: 24px; color: #222; letter-spacing: .1px;`;
const PropArea = styled.div`height: 210px; flex: none; display: flex; padding-left: 2px;`;
const PropGrid = styled.div`width: 337px; background: #fff; overflow: hidden; border-right: 1px dotted #777; letter-spacing: .22px;`;
const PropRow = styled.div`
  height: 24px; display: grid; grid-template-columns: 161px 161px 1fr; border-bottom: 1px dotted #777; color: ${p => (p.$dim ? "#777" : "#111")};
`;
const Cell = styled.div`
  border-right: ${p => (p.$end ? 0 : 1)}px dotted #777; padding-left: ${p => p.$pl || 0}px; line-height: 20px; overflow: hidden; display: flex; letter-spacing: ${p => p.$ls ?? .22}px;
`;
const EditButton = styled.button`
  all: unset; box-sizing: border-box; flex: 1; margin: 1px 0 0 1px; height: 22px; text-align: center; line-height: 19px; background: #fdfdfd;
  border: 1px solid #ccc; border-bottom: 2px solid #b9b9b9; border-radius: 4px;
`;
const Track = styled.div`flex: 1; padding: ${p => p.$pad};`;
const VThumb = styled.div`width: 3px; height: ${p => p.$h}px; background: #8a8a8a; border-radius: 2px;`;
const HThumb = styled.div`width: ${p => p.$w}px; height: 3px; background: #8a8a8a; border-radius: 2px;`;
const PropFoot = styled.div`height: 32px; flex: none; display: flex; justify-content: space-between; padding: 2px 6px 0 4px; align-items: flex-start;`;
const HelpLink = styled.a`color: #0a63c4; text-decoration: underline; line-height: 20px;`;
const Apply = styled.button`all: unset; width: 84px; height: 24px; text-align: center; line-height: 24px; background: #fafafa; border-radius: 3px; color: #999; letter-spacing: .4px;`;
const Browser = styled.div`border-top: 2px solid #ccc; flex: 1; display: flex; flex-direction: column; min-height: 0;`;
const TreeArea = styled.div`height: 338px; display: flex; padding-left: 2px; flex: none;`;
const Tree = styled.div`width: 339px; background: #fff; overflow: hidden; color: #111; position: relative;`;
const TreeGuides = styled.svg`position: absolute; left: 0; top: 0;`;
const TreeRow = styled.div`height: 22px; display: flex; align-items: center; padding-left: ${p => p.$pl}px; position: relative; letter-spacing: .3px;`;
const TreeIcon = styled.span`width: 21px; margin-right: 6px; display: flex; justify-content: center;`;
const TreeText = styled.span`line-height: 22px; padding: 0 4px; letter-spacing: ${p => p.$ls ?? .3}px; ${p => p.$sel && css`background: #e2e2e2;`}`;
const Toggle = styled.span`
  width: 13px; height: 13px; border: 1px solid #919191; background: #fff; position: relative; flex: none; margin-right: ${p => p.$mr}px; top: 1px;
  &::before { content: ""; position: absolute; left: 2px; top: 5px; width: 7px; height: 1px; background: #2b4a9b; }
  &::after { content: ""; position: absolute; left: 5px; top: 2px; width: 1px; height: ${p => (p.$plus ? 7 : 0)}px; background: #2b4a9b; }
`;

const Center = styled.div`flex: 1; display: flex; flex-direction: column; min-width: 0;`;
const DocTabs = styled.div`height: 27px; flex: none; background: #cbcbcb; display: flex; align-items: flex-end; padding-right: 3px;`;
const DocTab = styled.div`
  width: ${p => p.$w}px; height: 24px; display: flex; align-items: center; padding: 0 0 2px 6px; gap: 9px; color: ${p => (p.$on ? "#555a63" : "#8b8f96")}; letter-spacing: ${p => p.$ls ?? .27}px;
  ${p => p.$on && css`background: #fff; font-weight: 700; letter-spacing: 0.15px;`}
`;
const DocLabel = styled.span`color: #3a3a3a; flex: 1;`;
const TabsMenu = styled.div`margin-left: auto; height: 24px; display: flex; align-items: center;`;
const CanvasRow = styled.div`flex: 1; display: flex; min-height: 0; position: relative;`;
const Sheet = styled.svg`background: #fff; margin-left: 1px;`;
const Gutter = styled.div`flex: 1; background: #efefef; display: flex; padding: 349px 0 0 8px; margin-top: 2px;`;
const NavBar = styled.div`
  position: absolute; left: 1497px; top: 2px; width: 36px; height: 118px; border: 2px solid #bdbdbd; border-radius: 6px; background: #f4f4f4;
  display: flex; flex-direction: column; align-items: center; padding-top: 1px;
`;
const NavDot = styled.div`
  width: 9px; height: 9px; border: 2px solid #aaa; border-radius: 50%; align-self: flex-end; margin-right: 3px; display: flex; align-items: center; justify-content: center;
  &::after { content: ""; width: 3px; height: 1px; background: #999; }
`;
const NavPart = styled.div`height: ${p => p.$h}px; display: flex; flex-direction: column; align-items: center; justify-content: flex-end; gap: ${p => p.$g}px; ${p => p.$line && css`border-bottom: 1px solid #bbb; width: 26px; padding-bottom: 4px;`}`;
const NavCaret = styled.span`border: 3px solid transparent; border-top: 3px solid #888; border-bottom: 0;`;
const ViewBar = styled.footer`height: 22px; flex: none; background: #efefef; border-bottom: 1px solid #ccc; margin-left: 2px; display: flex; align-items: center; padding-left: 12px;`;
const Scale = styled.span`width: 80px; font-family: "DejaVu Sans Condensed", "DejaVu Sans", sans-serif; font-size: 12.7px; color: #111; padding-bottom: 1px;`;
const ScrollSpot = styled.div`margin-left: 576px;`;

/* ---------- data ---------- */
const quick = [
  ["logo", 0], ["props", 8], ["open", 15], ["save", 10], ["cloud", 10], ["caret", 10], ["undo", 9], ["caret", 9], ["redo", 10], ["caret", 9],
  ["print", 10], ["pdf", 9], ["line", 9], ["dimPin", 7], ["line", 9], ["ruler", 7], ["caret", 11], ["align", 9], ["tag", 11], ["textA", 11],
  ["line", 11], ["house", 8], ["caret", 10], ["section", 10], ["thin", 13], ["line", 10], ["closeWin", 9], ["switchWin", 9], ["caret", 7],
  ["comp", 11], ["caret", 9], ["qatMenu", 9],
];
const ribbonTabs = [["Structure", 84], ["Steel", 59], ["Precast", 71], ["Systems", 80], ["Insert", 58], ["Annotate", 87], ["Analyze", 76], ["Massing & Site", 123], ["Collaborate", 104], ["View", 54], ["Manage", 80], ["Add-Ins", 74], ["Modify", 73]];
const build = [["wall", "Wall", 60, 1], ["door", "Door", 44], ["window", "Window", 66], ["component", "Component", 104, 1], ["column", "Column", 80, 1], ["roof", "Roof", 60, 1], ["ceiling", "Ceiling", 54], ["floor", "Floor", 62, 1], ["curtainSystem", "Curtain\nSystem", 58], ["curtainGrid", "Curtain\nGrid", 50], ["mullion", "Mullion", 62]];
const circulation = [["railing", "Railing", 82, 1], ["ramp", "Ramp", 40], ["stair", "Stair", 54]];
const model = [["modelText", "Model\nText", 56], ["modelLine", "Model\nLine", 46], ["modelGroup", "Model\nGroup", 70, 2]];

const props = [
  ["Parts Visibility", "Show Original"], ["Visibility/Graphics O...", "Edit...", "b"], ["Graphic Display Opti...", "Edit...", "b"], ["Orientation", "Project North"],
  ["Wall Join Display", "Clean all wall joins", "d"], ["Discipline", "Electrical"], ["Show Hidden Lines", "By Discipline"], ["Color Scheme Locati...", "Background"], ["Color Scheme", "<none>", "b"],
];

const Big = ({ item: [icon, label, w, caret] }) => (
  <BigButton $w={w}>
    <BigIcon><Icon name={icon} /></BigIcon>
    <BigLabel>{label}</BigLabel>
    {caret === 1 && <Caret />}
    {caret === 2 && <SideCaret><Caret $s={2.5} /></SideCaret>}
  </BigButton>
);
const Row = ({ icon, children, caret, off }) => (
  <SmallItem $off={off}><SmallIcon><Icon name={icon} /></SmallIcon><SmallLabel>{children}</SmallLabel>{caret && <SmallCaret><Caret /></SmallCaret>}</SmallItem>
);

/* ---------- floor plan ---------- */
const walls = [
  "M923.5 245V736.500H1076.500V727.500H932.500V521.500H1084.500V513.500H932.500V328.500H1118.500V320.500H1087.500V272.500H1079.500V320.500H932.500V245",
  "M1197.500 245V320.500H1170.500V328.500H1197.500V336.500H1205.500V263.500H1326.500V245M1205.500 245V255.500H1318.500V245",
  "M1389.500 245V285.500H1399.500V245M1129.500 513.500H1173.500V392.500H1197.500V385.500H1205.500V392.500H1280.500V333.500H1288.500V392.500H1389.500V332.500H1399.500V469.500H1389.500V400.500H1181.500V528.500H1173.500V521.500H1129.500Z",
  "M1399.500 516.500H1389.500V584.500H1181.500V577.500H1173.500V584.500H1138.500V606.500H1146.500V592.500H1389.500V808.500H1307.500V818.500H1399.500V515",
  "M1138.500 666.500H1146.500V743.500H1138.500ZM1260.500 818.500H1145.500V820H1138.500V802.500H1146.500V808.500H1260.500V818.500M1138 737H1136V728",
];
const thinLines = [
  "M932.500 320V329M932.500 513V522M1389.500 392V401M1389.500 584V593M1076 736.500H1136M1145.500 808V818",
  "M1087.500 269.500H1136.500V272.500H1087.500M1136.500 269L1134.500 258L1131 251L1127.500 245",
  "M1167.500 328.500V380.500H1170.500V328.500M1167 380.500L1148 375.500L1133 364L1122 347L1118.500 329",
  "M1205.500 382.500H1254.500V385.500H1205.500M1254.500 382V378L1250.500 365L1240 349.500L1224.500 339.500L1205.500 336.500",
  "M1181.500 528.500L1199.500 531.500L1216 542.500L1226 556.500L1230.500 574V577M1181.500 574.500H1230.500",
  "M1132.500 668.500H1135.500V727.500H1132.500ZM1132 668.500L1110.500 673.500L1093 686.500L1080.500 706L1077.500 727",
  "M1146.500 799.500H1205.500V802.500H1146.500M1146.500 743.500L1168.500 747.500L1187.500 760L1200 777.500L1204.500 799",
  "M934.500 331.500V469.500H975.500V372.500H1068.500V331.500H934.500M936.500 332V469M936 332.500H1068",
  "M1208.500 267.500H1326.500V307.500H1208.500ZM1208 268.500H1326",
  "M923.500 737V879.500H1002.500V875.500H926.500V737M1066.500 879.500V875.500H1138.500V744M1135.500 737V875M1066.500 879.500H1141.500V820",
  "M1138.500 607V620M1146.500 607V620M1138.500 630V644M1146.500 630V644M1138.500 654V666M1146.500 654V666",
  "M921.500 758V776M921.500 798V815M921.500 837V854M1142.500 845V862M944 880.500H962M984 880.500H1002M1023 880.500H1041M1062 880.500H1080M1102 880.500H1119",
  "M1003.500 880V964M1006.500 880V964M1009.500 880V964M1062.500 880V964M1065.500 880V964M1068.500 880V964",
  "M1009 898.500H1062M1009 916.500H1062M1009 934.500H1062M1009 952.500H1062",
];
const LeftWindow = ({ y, h }) => (
  <g>
    <rect x="922" y={y + .5} width="12" height={h - 1} fill="#fff" stroke="none" />
    <path d={`M923.500 ${y}v${h}M931.500 ${y}v${h}M929.500 ${y}v${h}M924 ${y}h8M924 ${y + h}h8M924 ${y + 2}h5M924 ${y + h - 2}h5`} fill="none" />
    <path d={`M925 ${y + 5}v${h - 10}`} strokeWidth="2" />
  </g>
);

const Plan = () => (
  <Sheet width="1533" height="721" viewBox="366 243 1533 721" shapeRendering="crispEdges">
    <g stroke="#aaffff" strokeWidth="4" shapeRendering="auto" strokeLinecap="round">
      <path d="M1087 518H1092M1113 518H1127" />
      <path d="M921 733V756M921 778V796M921 817V835M921 856V881H943M963 881H982M1003 881H1022M1042 881H1061M1081 881H1100M1120 881H1142V864M1142 844V827" fill="none" />
    </g>
    <g stroke="#a9a9a9" fill="none">
      <g strokeWidth="3">{walls.map(d => <path key={d} d={d} />)}</g>
      {thinLines.map(d => <path key={d} d={d} />)}
      <path d="M1009 897.500H1062M1009 915.500H1062M1009 933.500H1062M1009 951.500H1062" strokeDasharray="8 6 10 6" />
      <LeftWindow y={410.500} h={43} /><LeftWindow y={586.500} h={46} /><LeftWindow y={637.500} h={45} />
      <path d="M1389.500 286V332M1393.500 287V331M1399.500 286V332M1394 289.500H1399M1394 329.500H1399M1389.500 470V516M1396.500 470V516M1399.500 470V516M1390 472.500H1396M1390 513.500H1396M1261 808.500H1307M1261 812.500H1307M1263.500 812V818M1304.500 812V818" />
      <path d="M1397.500 291V328M1392 476V511M1266 815.500H1303" strokeWidth="3" />
      <g stroke="#e4e4e4"><rect x="944.500" y="390.500" width="25" height="63" rx="3" /><circle cx="1237.700" cy="287.500" r="13.500" /><circle cx="1296.500" cy="287.500" r="13.500" /></g>
    </g>
    <g stroke="#000" fill="none" strokeWidth="2">
      <path d="M949 317V378M950 378V565M974 578H1358M1378 598V775M1136 644H1341M1360 663V770" />
      <path d="M1358 578L1378 598M1340.500 644L1360 663.500" />
      <path d="M1254.500 569V589M1259.500 569V589M1264.500 569V589M1291.500 634V654M1296.500 634V654M1301.500 634V654" strokeWidth="1" />
      <rect x="1068" y="532" width="101" height="49" /><rect x="940" y="637" width="126" height="72" />
      <path d="M1135.500 625.500H1099V661.500H1135.500Z" strokeWidth="1.500" /><rect x="1355.500" y="774.500" width="33" height="33" strokeWidth="1" />
      <g shapeRendering="auto">
        <circle cx="949.400" cy="302.500" r="14.300" strokeWidth="2.600" /><circle cx="965.300" cy="564.500" r="14.300" strokeWidth="2.600" />
        <path d="M1003 637Q1004 598 984 577M989 596L984 577L998 590M1119 581V597L1114.500 625M1112.500 604L1114.500 625L1122 607" />
      </g>
      <g fill="#000" stroke="none">
        <path d="M941 301h4v3h-4zM954 301h4v3h-4zM957 563h3v3h-3zM970 563h3v3h-3zM1356.500 752h6.500l-2 20h-1.500zM1374.500 755h6.500l-2 21h-1.500z" />
      </g>
    </g>
    <g fontFamily="Liberation Sans, Arial, sans-serif" fontSize="20.600" fill="#111" textAnchor="middle">
      <text x="1118" y="564">Furnace</text><text x="1000" y="668">Hot Water</text><text x="1001.500" y="692">Heater</text>
    </g>
  </Sheet>
);

const HiddenSvg = styled.svg`position: absolute;`;
const Defs = () => (
  <HiddenSvg width="0" height="0">
    <defs>
      <linearGradient id="gl" x1="0" y1="0" x2="1" y2="1"><stop offset="0" stopColor="#fdfdfd" /><stop offset="1" stopColor="#c3c8cf" /></linearGradient>
      <linearGradient id="gd" x1="0" y1="0" x2="0" y2="1"><stop offset="0" stopColor="#8a92a1" /><stop offset="1" stopColor="#c2c8d1" /></linearGradient>
      <linearGradient id="gd2" x1="0" y1="0" x2="0" y2="1"><stop offset="0" stopColor="#cfd4db" /><stop offset="1" stopColor="#f2f3f4" /></linearGradient>
      <linearGradient id="gc" x1="0" y1="0" x2="1" y2="0"><stop offset="0" stopColor="#aab0ba" /><stop offset=".4" stopColor="#fff" /><stop offset="1" stopColor="#9aa1ac" /></linearGradient>
    </defs>
  </HiddenSvg>
);

const bottomIcons = [["vDetail", 21], ["vStyle", 27], ["vSun", 21], ["vShadow", 32], ["vCropX", 17], ["vCropB", 32], ["vGlasses", 19], ["vBulb", 30], ["vTemp", 21], ["vAnal", 28], ["vConst", 22]];

export default function App() {
  return (
    <>
      <GlobalStyle />
      <Defs />
      <Shell>
        <TitleBar>
          <Quick>
            {quick.map(([n, gap], i) => (
              <QuickItem key={i} $gap={gap}>{n === "caret" ? <Caret /> : n === "line" ? <Divider /> : <Icon name={n} />}</QuickItem>
            ))}
          </Quick>
          <Title>Autodesk Revit 2023 - electrical Wardah Shams - Floor Plan: HVAC Existing</Title>
          <Account>
            <Slot $w={27}><BackArrow /></Slot>
            <Icon name="binoc" /><Slot $w={10} /><Icon name="user" />
            <UserName>wardahshams7</UserName>
            <Slot $w={22}><Caret /></Slot><Slot $w={5} /><Icon name="cart" /><Slot $w={12} />
            <Slot $w={12} $line /><Icon name="help" /><Slot $w={26}><Caret /></Slot>
            <Slot $w={72} /><Icon name="min" /><Slot $w={17} /><Icon name="restore" /><Slot $w={17} /><Icon name="close" />
          </Account>
        </TitleBar>
        <RibbonTabs>
          <RTab $w={56} $file>File</RTab>
          <RTab $w={103} $on>Architecture</RTab>
          {ribbonTabs.map(([t, w]) => <RTab key={t} $w={w}>{t}</RTab>)}
          <Slot $w={26} /><Icon name="collapse" /><Slot $w={18}><Caret /></Slot>
        </RibbonTabs>
        <Ribbon>
          <Panel $w={72}>
            <PanelBody><ModifyButton><Icon name="cursor" />Modify</ModifyButton></PanelBody>
            <PanelTitle>Select <Caret $s={5} /></PanelTitle>
          </Panel>
          <Panel $w={701}><PanelBody>{build.map(i => <Big key={i[0]} item={i} />)}</PanelBody><PanelTitle>Build</PanelTitle></Panel>
          <Panel $w={177}><PanelBody>{circulation.map(i => <Big key={i[0]} item={i} />)}</PanelBody><PanelTitle>Circulation</PanelTitle></Panel>
          <Panel $w={173}><PanelBody>{model.map(i => <Big key={i[0]} item={i} />)}</PanelBody><PanelTitle>Model</PanelTitle></Panel>
          <Panel $w={191}>
            <PanelBody>
              <Big item={["byFace", "By\nFace", 54]} /><Big item={["shaft", "Shaft", 40]} />
              <Small $pl={11}><Row icon="oWall">Wall</Row><Row icon="oVert">Vertical</Row><Row icon="oDormer">Dormer</Row></Small>
            </PanelBody>
            <PanelTitle>Opening</PanelTitle>
          </Panel>
          <Panel $w={298}>
            <PanelBody>
              <Small $pl={9} $w="159px"><Row icon="room">Room</Row><Row icon="roomSep">Room Separator</Row><Row icon="tagRoom" caret>Tag Room</Row></Small>
              <Small><Row icon="area" caret>Area</Row><Row icon="areaB" off>Area Boundary</Row><Row icon="tagArea" caret>Tag Area</Row></Small>
            </PanelBody>
            <PanelTitle>Room &amp; Area <Caret $s={5} /></PanelTitle>
          </Panel>
          <Panel $w={80}>
            <PanelBody><Small $pl={8} $pt={18}><Row icon="level" off>Level</Row><Row icon="grid">Grid</Row></Small></PanelBody>
            <PanelTitle>Datum</PanelTitle>
          </Panel>
          <Panel $w={158} $last>
            <PanelBody>
              <Big item={["set", "Set", 53, 1]} />
              <Small $pl={4}><Row icon="show">Show</Row><Row icon="refPlane">Ref Plane</Row><Row icon="viewer">Viewer</Row></Small>
            </PanelBody>
            <PanelTitle>Work Plane</PanelTitle>
          </Panel>
        </Ribbon>
        <Options />
        <Work>
          <Left>
            <DockTitle>Properties <Icon name="close" /></DockTitle>
            <TypeBox><Thumb><Icon name="planBig" /></Thumb><TypeName>Floor Plan</TypeName><Caret $s={5} /></TypeBox>
            <PickRow>
              <Combo>Floor Plan: HVAC Existing<svg width="10" height="6" fill="none"><path d="M.5 .5L5 5L9.500 .5" stroke="#555" /></svg></Combo>
              <EditType><Icon name="editType" />Edit Type</EditType>
            </PickRow>
            <PropArea>
              <PropGrid>
                {props.map(([k, v, t]) => (
                  <PropRow key={k} $dim={t === "d"}>
                    <Cell $pl={10} $ls={.14}>{k}</Cell>
                    <Cell $pl={t === "b" ? 0 : 2}>{t === "b" ? <EditButton>{v}</EditButton> : v}</Cell>
                    <Cell $end />
                  </PropRow>
                ))}
              </PropGrid>
              <Track $pad="43px 0 0 9px"><VThumb $h={33} /></Track>
            </PropArea>
            <PropFoot><HelpLink>Properties help</HelpLink><Apply>Apply</Apply></PropFoot>
            <Browser>
              <DockTitle>Project Browser - electrical Wardah Shams <Icon name="close" /></DockTitle>
              <TreeArea>
                <Tree>
                  <TreeGuides width="339" height="338" fill="none">
                    <path d="M10.500 0V320M88.500 0V6M96 12.500H107M114.500 22V100M116 34.500H133M116 56.500H133M116 78.500H133M116 100.500H133M12 122.500H25M12 144.500H25M18 166.500H25M36.500 176V232M38 188.500H55M38 210.500H55M38 232.500H55M12 254.500H25M18 276.500H25M18 298.500H25M18 320.500H25" stroke="#888" strokeDasharray="1 1" shapeRendering="crispEdges" />
                  </TreeGuides>
                  <TreeRow $pl={82}><Toggle $mr={11} /><TreeText>Elevations (Building Elevation)</TreeText></TreeRow>
                  {["East", "North", "South", "West"].map(d => <TreeRow key={d} $pl={132}><TreeText>{d} - Elec</TreeText></TreeRow>)}
                  <TreeRow $pl={25}><TreeIcon><Icon name="legend" /></TreeIcon>Legends</TreeRow>
                  <TreeRow $pl={25}><TreeIcon><Icon name="table" /></TreeIcon>Schedules/Quantities (all)</TreeRow>
                  <TreeRow $pl={4}><Toggle $mr={8} /><TreeIcon><Icon name="sched" /></TreeIcon>Panel Schedules</TreeRow>
                  <TreeRow $pl={55}><TreeText $sel $ls={.12}>100 A Exisitng, 120 V/208 V, Three Phase, 4 Wires</TreeText></TreeRow>
                  <TreeRow $pl={55}><TreeText $ls={.14}>100 A N.C, 120 V/208 V, Three Phase, 4 Wires, MLO</TreeText></TreeRow>
                  <TreeRow $pl={55}><TreeText $ls={.14}>200 A N.C, 120 V/208 V, Three Phase, 4 Wires, MLO</TreeText></TreeRow>
                  <TreeRow $pl={25}><TreeIcon><Icon name="sheets" /></TreeIcon>Sheets (all)</TreeRow>
                  <TreeRow $pl={4}><Toggle $plus $mr={8} /><TreeIcon><Icon name="families" /></TreeIcon>Families</TreeRow>
                  <TreeRow $pl={4}><Toggle $plus $mr={8} /><TreeIcon><Icon name="groups" /></TreeIcon>Groups</TreeRow>
                  <TreeRow $pl={4}><Toggle $plus $mr={8} /><TreeIcon><Icon name="links" /></TreeIcon>Revit Links</TreeRow>
                </Tree>
                <Track $pad="187px 0 0 8px"><VThumb $h={131} /></Track>
              </TreeArea>
              <Track $pad="8px 0 0 23px"><HThumb $w={238} /></Track>
            </Browser>
          </Left>
          <Center>
            <DocTabs>
              <DocTab $w={195}><Icon name="plan" /><DocLabel>0 - Lighting Existing</DocLabel></DocTab>
              <DocTab $w={168}><Icon name="plan" /><DocLabel>0 - Lighting N.C</DocLabel></DocTab>
              <DocTab $w={164} $on><Icon name="plan" /><DocLabel>HVAC Existing</DocLabel><svg width="13" height="13" viewBox="0 0 14 14"><path d="M1 1L13 13M13 1L1 13" stroke="#333" strokeWidth="2.800" /></svg><i /></DocTab>
              <DocTab $w={159}><Icon name="plan" /><DocLabel>HVAC N.C</DocLabel></DocTab>
              <DocTab $w={161}><Icon name="view3d" /><DocLabel>{"{3D}"}</DocLabel></DocTab>
              <DocTab $w={300} $ls={.18}><Icon name="sched" /><DocLabel>100 A Exisitng, 120 V/208 V, Three...</DocLabel></DocTab>
              <TabsMenu><Icon name="qatMenu" /></TabsMenu>
            </DocTabs>
            <CanvasRow>
              <Plan />
              <Gutter><VThumb $h={20} /></Gutter>
              <NavBar>
                <NavDot />
                <NavPart $h={47} $g={7} $line><Icon name="wheel" /><NavCaret /></NavPart>
                <NavPart $h={38} $g={11}><Icon name="zoomReg" /><NavCaret /></NavPart>
                <NavPart $h={11} /><NavDot />
              </NavBar>
            </CanvasRow>
            <ViewBar>
              <Scale>1/8" = 1'-0"</Scale>
              {bottomIcons.map(([n, w]) => <Slot key={n} $w={w}><Icon name={n} /></Slot>)}
              <ScrollSpot><HThumb $w={20} /></ScrollSpot>
            </ViewBar>
          </Center>
        </Work>
      </Shell>
    </>
  );
}
